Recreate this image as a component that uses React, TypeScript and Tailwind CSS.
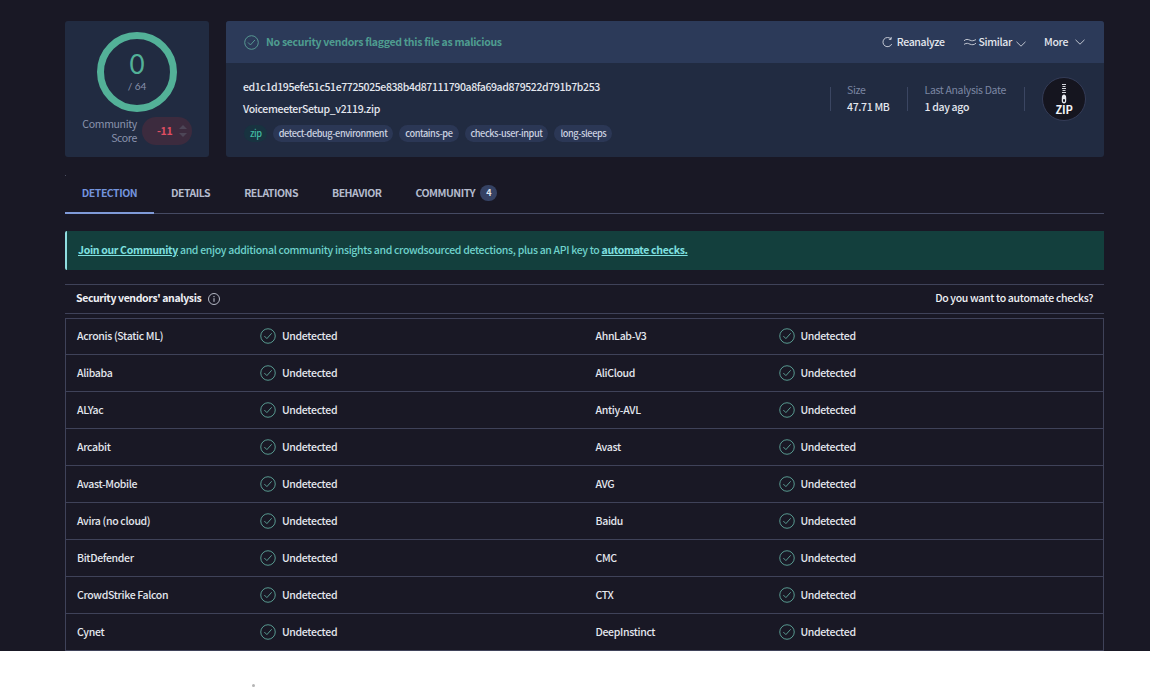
const font = "font-['Noto_Sans_CJK_SC','Noto_Sans',sans-serif]";

const vendors = [
  ['Acronis (Static ML)', 'AhnLab-V3'],
  ['Alibaba', 'AliCloud'],
  ['ALYac', 'Antiy-AVL'],
  ['Arcabit', 'Avast'],
  ['Avast-Mobile', 'AVG'],
  ['Avira (no cloud)', 'Baidu'],
  ['BitDefender', 'CMC'],
  ['CrowdStrike Falcon', 'CTX'],
  ['Cynet', 'DeepInstinct'],
];

const tags = ['detect-debug-environment', 'contains-pe', 'checks-user-input', 'long-sleeps'];

// Thin circled tick used for the verdicts
const CheckCircle = ({ className }: { className: string }) => (
  <svg viewBox="0 0 16 16" fill="none" className={className}>
    <circle cx="8" cy="8" r="7.25" stroke="currentColor" strokeWidth="0.9" />
    <path d="M4.6 8.3l2.3 2.3 4.5-5" stroke="currentColor" strokeWidth="0.9" strokeLinecap="round" strokeLinejoin="round" />
  </svg>
);

const Chevron = ({ className }: { className: string }) => (
  <svg viewBox="0 0 10 6" fill="none" className={className}>
    <path d="M.5.8L5 5.2 9.500.8" stroke="currentColor" strokeWidth="0.8" />
  </svg>
);

const ZipBadge = () => (
  <div className="flex h-[44px] w-[44px] flex-col items-center justify-center rounded-full border border-[#343c57] bg-[#15151f]">
    <svg viewBox="0 0 8 21" className="h-[21px] w-[8px] text-[#e8eaf0]" fill="none">
      <path d="M2 .5h4M2.500 2.500h3M2 4.500h4M2.500 6.500h3M2 8.500h4" stroke="currentColor" strokeWidth="0.9" />
      <path d="M4 10.500c1.500 0 2.200 1.500 2.200 3.400v3.200c0 1.600-.9 2.500-2.200 2.500s-2.200-.9-2.200-2.500v-3.200c0-1.900.7-3.400 2.200-3.400z" fill="currentColor" />
      <rect x="3" y="15" width="2" height="3" rx="1" fill="#15151f" />
    </svg>
    <span className="mt-[-1px] text-[11px] leading-[10px] font-bold tracking-[-0.2px] text-[#f1f2f6]">ZIP</span>
  </div>
);

const Cell = ({ name }: { name: string }) => (
  <div className="flex h-[36px] w-1/2 items-center pl-[11px]">
    <span className="w-[183px] text-[#e4e7ee]">{name}</span>
    <CheckCircle className="h-[16px] w-[16px] text-[#5fa89c]" />
    <span className="ml-[6px] text-[#e4e7ee]">Undetected</span>
  </div>
);

export default function App() {
  return (
    <div className={`${font} h-[689px] w-[1150px] overflow-hidden bg-white text-[10.5px] font-medium tracking-[-0.33px]`}>
      <div className="h-[651px] bg-[#191825] pt-[21px] pr-[46px] pl-[65px]">
        <div className="flex gap-[17px]">
          {/* Score card */}
          <div className="flex h-[136px] w-[144px] flex-col items-center rounded-[3px] bg-[#212b41] pt-[11px]">
            <div className="flex h-[80px] w-[80px] flex-col items-center justify-center rounded-full border-[7px] border-[#53b198] pb-[3px] font-['Lato',sans-serif]">
              <span className="text-[26px] leading-[31px] font-normal tracking-normal text-[#53b198]">0</span>
              <span className="text-[10px] leading-[12px] font-normal tracking-normal text-[#8a93ad]">/ 64</span>
            </div>
            <div className="mt-[5px] flex w-full items-center pl-[17px]">
              <div className="w-[55px] text-right leading-[14px] font-normal text-[#8a93ad]">
                Community Score
              </div>
              <div className="ml-[5px] flex h-[28px] w-[50px] items-center gap-[7px] rounded-full bg-[#3c2b3e] pl-[15px] font-semibold text-[#e04e62]">
                <span>-11</span>
                <span className="flex flex-col gap-[4px]">
                  <svg viewBox="0 0 8 4" className="h-[4px] w-[8px] text-[#4d4657]"><path d="M0 4l4-4 4 4z" fill="currentColor" /></svg>
                  <svg viewBox="0 0 8 4" className="h-[4px] w-[8px] text-[#4d4657]"><path d="M0 0l4 4 4-4z" fill="currentColor" /></svg>
                </span>
              </div>
            </div>
          </div>

          {/* File card */}
          <div className="h-[136px] flex-1 overflow-hidden rounded-[3px] bg-[#212b41]">
            <div className="flex h-[42px] items-center justify-between bg-[#2c3a59] pr-[19px] pl-[18px]">
              <div className="flex items-center gap-[7px] font-semibold tracking-[-0.3px] text-[#4f9d90]">
                <CheckCircle className="h-[15px] w-[15px] text-[#5fa89c]" />
                <span>No security vendors flagged this file as malicious</span>
              </div>
              <div className="flex items-center text-[#e4e7ee]">
                <svg viewBox="0 0 12 12" fill="none" className="h-[12px] w-[11px]">
                  <path d="M9.800 2.800A5 5 0 1 0 10.600 8.200" stroke="currentColor" strokeWidth="0.9" />
                  <path d="M10 .5v2.600H7.500" stroke="currentColor" strokeWidth="0.9" />
                </svg>
                <span className="ml-[4px]">Reanalyze</span>
                <svg viewBox="0 0 12 8" fill="none" className="ml-[19px] h-[8px] w-[12px]">
                  <path d="M0 2.800c2-2 4-1.500 6-.6s3 .8 6-.6M0 6.400c3-1.800 4-1 6-.2s4 .8 6-1" stroke="currentColor" strokeWidth="0.8" />
                </svg>
                <span className="ml-[3px]">Similar</span>
                <Chevron className="mt-[3px] ml-[4px] h-[6px] w-[10px]" />
                <span className="ml-[18px]">More</span>
                <Chevron className="ml-[7px] h-[6px] w-[10px]" />
              </div>
            </div>
            <div className="flex items-start justify-between pr-[18px] pl-[17px]">
              <div>
                <div className="mt-[16px] leading-[16px] tracking-[-0.39px] text-[#e4e7ee]">
                  ed1c1d195efe51c51e7725025e838b4d87111790a8fa69ad879522d791b7b253
                </div>
                <div className="mt-[6px] leading-[16px] text-[#e4e7ee]">VoicemeeterSetup_v2119.zip</div>
                <div className="mt-[8px] flex items-center gap-[6px] text-[9.2px] leading-[17px] tracking-[-0.42px]">
                  <span className="ml-[1px] rounded-full bg-[#183340] pr-[5px] pl-[6px] text-[#41b8a0]">zip</span>
                  {tags.map((t) => (
                    <span key={t} className="rounded-full bg-[#2b3755] px-[6px] text-[#ccd2e0]">{t}</span>
                  ))}
                </div>
              </div>
              <div className="mt-[14px] flex items-center">
                <div className="h-[24px] border-l border-[#3b4662]" />
                <div className="-mt-[3px] mr-[17px] ml-[16px] leading-[17px]">
                  <div className="font-normal text-[#7b86a2]">Size</div>
                  <div className="text-[#e4e7ee]">47.71 MB</div>
                </div>
                <div className="h-[24px] border-l border-[#3b4662]" />
                <div className="-mt-[3px] mr-[18px] ml-[17px] leading-[17px]">
                  <div className="font-normal text-[#7b86a2]">Last Analysis Date</div>
                  <div className="text-[#e4e7ee]">1 day ago</div>
                </div>
                <div className="h-[24px] border-l border-[#3b4662]" />
                <div className="ml-[17px]"><ZipBadge /></div>
              </div>
            </div>
          </div>
        </div>

        <div className="mt-[18px] h-px w-px bg-[#4a4d60]" />

        {/* Tabs */}
        <div className="-mt-[3px] flex h-[41px] border-b border-[#454a63] font-semibold tracking-[-0.48px] text-[#b4bbcd] uppercase">
          <div className="flex h-[41px] w-[89px] items-center justify-center border-b-2 border-[#7f9ad8] text-[#7393dc]">Detection</div>
          <div className="ml-[17px] flex h-[40px] items-center">Details</div>
          <div className="ml-[34px] flex h-[40px] items-center">Relations</div>
          <div className="ml-[34px] flex h-[40px] items-center">Behavior</div>
          <div className="ml-[34px] flex h-[40px] items-center">
            Community
            <span className="ml-[5px] flex h-[16px] w-[17px] items-center justify-center rounded-full bg-[#354264] text-[9px] text-[#dfe3ec]">4</span>
          </div>
        </div>

        {/* Community banner */}
        <div className="mt-[17px] flex h-[39px] items-center rounded-l-[2px] border-l-2 border-[#8fdde0] bg-[#133f3d] pb-[2px] pl-[11px] text-[#6fd2cc]">
          <span>
            <a className="font-bold text-[#7fe0e0] underline">Join our Community</a> and enjoy additional community insights and crowdsourced detections, plus an API key to{' '}
            <a className="font-bold text-[#7fe0e0] underline">automate checks.</a>
          </span>
        </div>

        {/* Vendors table */}
        <div className="mt-[14px] flex h-[30px] items-center justify-between border-y border-[#3f4259] pr-[11px] pb-[2px] pl-[11px] text-[#f0f1f5]">
          <div className="flex items-center gap-[7px] font-semibold tracking-[-0.38px]">
            Security vendors' analysis
            <svg viewBox="0 0 12 12" fill="none" className="mt-[1px] h-[12px] w-[12px] text-[#c5c9d6]">
              <circle cx="6" cy="6" r="5.500" stroke="currentColor" strokeWidth="0.9" />
              <path d="M6 5.200v3.600M6 3v1.200" stroke="currentColor" strokeWidth="1" />
            </svg>
          </div>
          <span>Do you want to automate checks?</span>
        </div>
        <div className="mt-[4px] border-x border-t border-[#3f4259]">
          <div className="-mt-px">
            {vendors.map(([a, b]) => (
              <div key={a} className="flex border-b border-[#3f4259]">
                <Cell name={a} />
                <Cell name={b} />
              </div>
            ))}
          </div>
        </div>
      </div>
      <div className="mt-[33px] ml-[252px] h-[3px] w-[3px] rounded-full bg-[#b5b5b5]" />
    </div>
  );
}
